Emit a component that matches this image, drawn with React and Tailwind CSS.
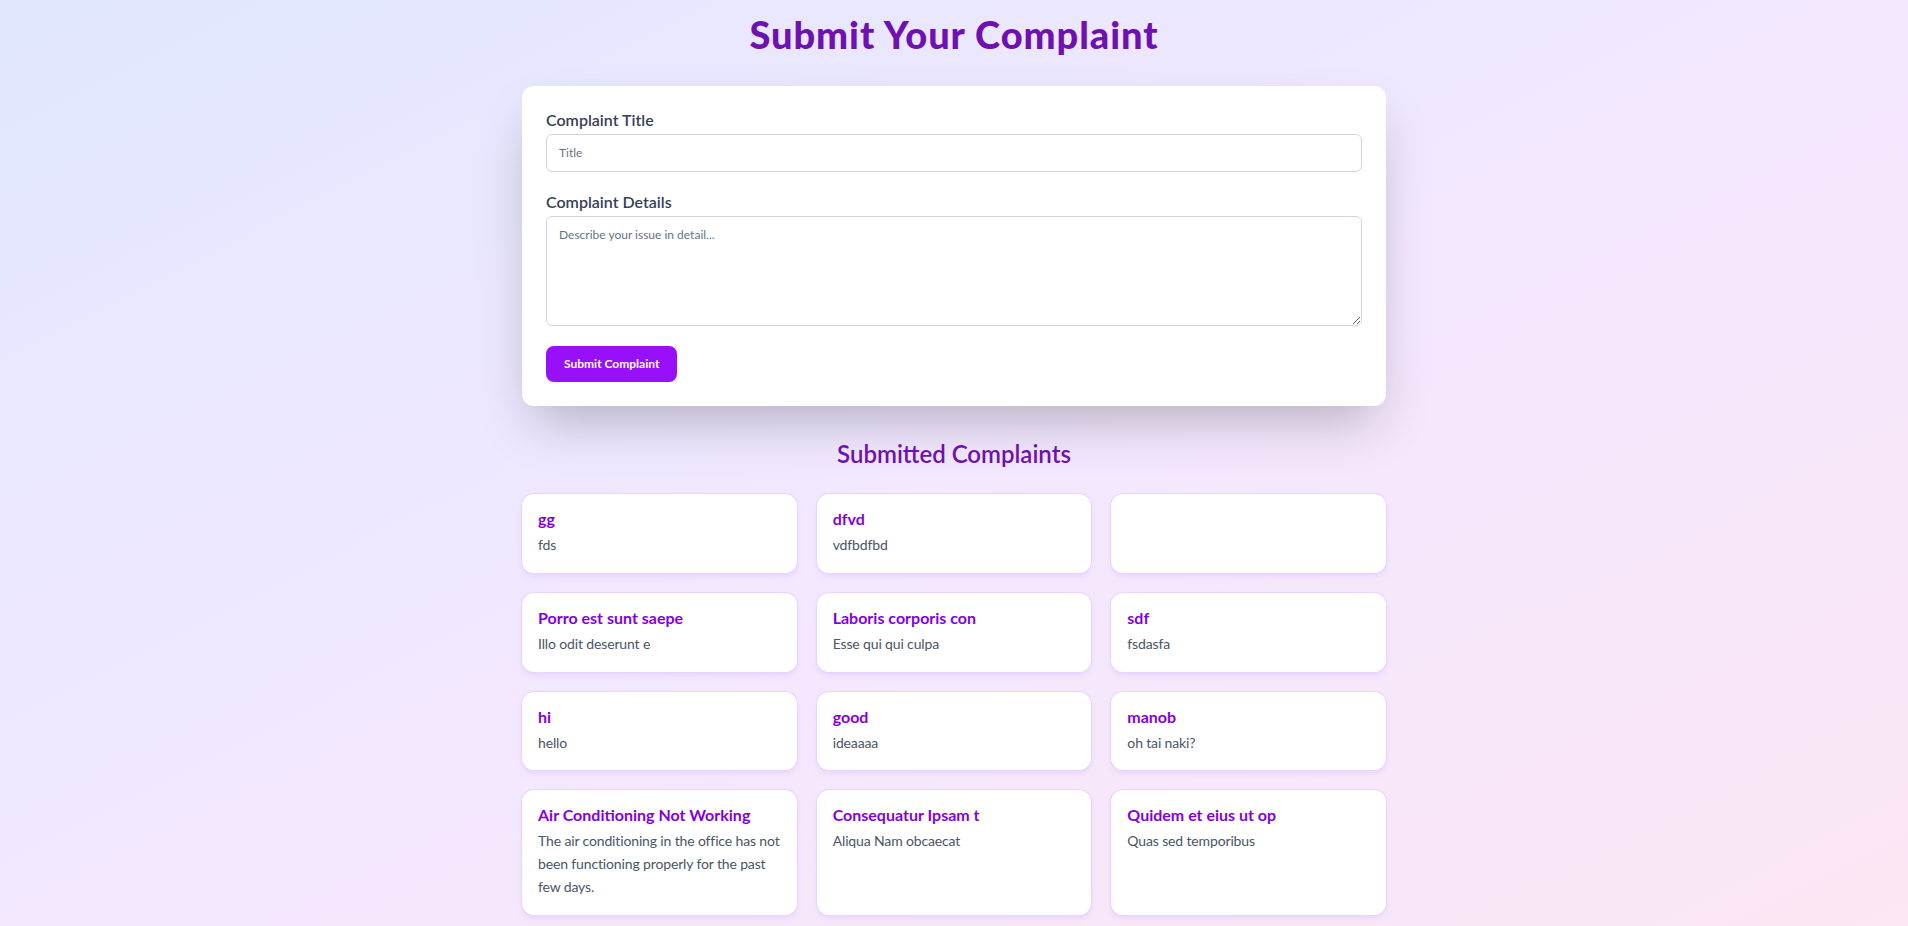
import { useState } from 'react'

const COMPLAINTS = [
  { id: 1, title: 'gg', details: 'fds' },
  { id: 2, title: 'dfvd', details: 'vdfbdfbd' },
  { id: 3, title: '', details: '' },
  { id: 4, title: 'Porro est sunt saepe', details: 'Illo odit deserunt e' },
  { id: 5, title: 'Laboris corporis con', details: 'Esse qui qui culpa' },
  { id: 6, title: 'sdf', details: 'fsdasfa' },
  { id: 7, title: 'hi', details: 'hello' },
  { id: 8, title: 'good', details: 'ideaaaa' },
  { id: 9, title: 'manob', details: 'oh tai naki?' },
  {
    id: 10,
    title: 'Air Conditioning Not Working',
    details: 'The air conditioning in the office has not been functioning properly for the past few days.',
  },
  { id: 11, title: 'Consequatur Ipsam t', details: 'Aliqua Nam obcaecat' },
  { id: 12, title: 'Quidem et eius ut op', details: 'Quas sed temporibus' },
]

/* ── Complaint card ── */
function ComplaintCard({ item }) {
  return (
    <div className="bg-white rounded-xl ring-1 ring-purple-200 shadow-md shadow-purple-200 p-4">
      {item.title && (
        <h3 className="text-base leading-[18px] font-bold text-purple-700 mb-1.5">{item.title}</h3>
      )}
      {item.details && (
        <p className="text-sm leading-relaxed tracking-[-0.01em] text-gray-600">{item.details}</p>
      )}
    </div>
  )
}

export default function App() {
  const [title, setTitle] = useState('')
  const [details, setDetails] = useState('')

  return (
    <div
      className="min-h-screen bg-gradient-to-br from-indigo-100 via-purple-100 to-pink-100"
      style={{ fontFamily: 'Lato, "Noto Sans", sans-serif' }}
    >
      <div className="max-w-4xl mx-auto px-4 pt-[14px] pb-10">
        <h1 className="text-[38px] leading-10 tracking-[0.025em] font-black text-purple-800 text-center mb-8">
          Submit Your Complaint
        </h1>

        {/* ── Form ── */}
        <form
          className="bg-white rounded-xl shadow-2xl p-6 mb-8"
          onSubmit={e => e.preventDefault()}
        >
          <div className="mb-5">
            <label className="block text-base leading-5 font-semibold text-gray-700 mb-1">
              Complaint Title
            </label>
            <input
              type="text"
              value={title}
              onChange={e => setTitle(e.target.value)}
              placeholder="Title"
              className="w-full border border-gray-300 rounded-md px-3 py-2.5 text-xs leading-4 text-gray-800 placeholder:text-gray-500 outline-none"
            />
          </div>
          <div className="mb-5">
            <label className="block text-base leading-5 font-semibold text-gray-700 mb-1">
              Complaint Details
            </label>
            <textarea
              value={details}
              onChange={e => setDetails(e.target.value)}
              placeholder="Describe your issue in detail..."
              className="w-full h-[110px] border border-gray-300 rounded-md px-3 py-2.5 text-xs leading-4 text-gray-800 placeholder:text-gray-500 outline-none block"
            />
          </div>
          <button
            type="submit"
            className="bg-purple-600 text-white text-xs leading-4 font-bold px-[18px] py-2.5 rounded-lg"
          >
            Submit Complaint
          </button>
        </form>

        {/* ── List ── */}
        <h2 className="text-2xl font-semibold text-purple-800 text-center mb-6">
          Submitted Complaints
        </h2>
        <div className="grid grid-cols-3 gap-5">
          {COMPLAINTS.map(item => (
            <ComplaintCard key={item.id} item={item} />
          ))}
        </div>
      </div>
    </div>
  )
}
